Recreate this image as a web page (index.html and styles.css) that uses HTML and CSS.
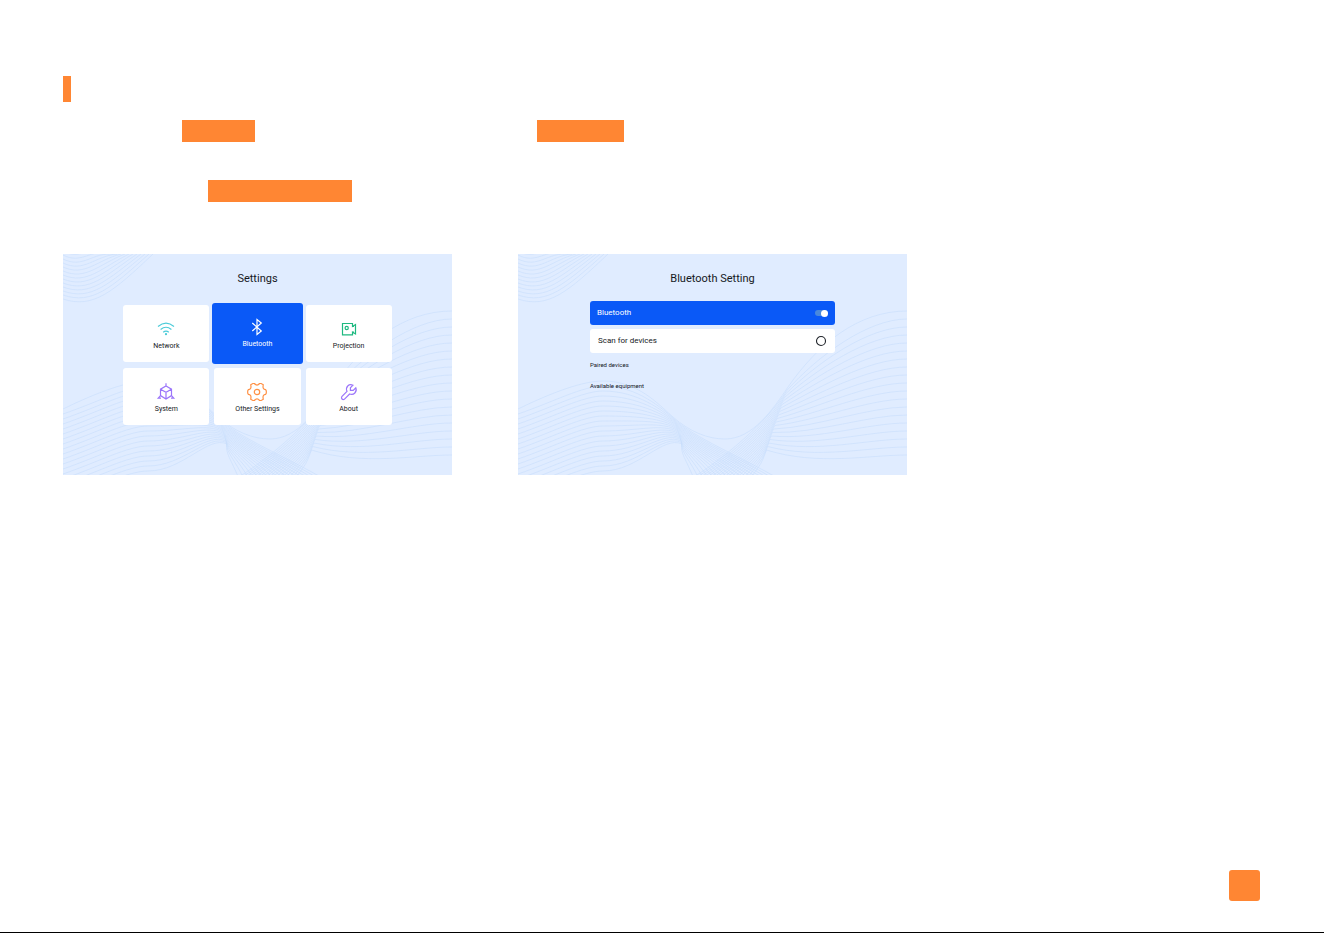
FILE: index.html
```
<!DOCTYPE html>
<html lang="en">
<head>
<meta charset="utf-8">
<title>Bluetooth Setting</title>
<link rel="stylesheet" href="styles.css">
</head>
<body>
<main class="page">
  <div class="heading-bar"></div>
  <div class="line"><span class="mark mark-a"></span><span class="mark mark-b"></span></div>
  <div class="line line-last"><span class="mark mark-c"></span></div>

  <div class="screens">
    <section class="screen">
      <svg class="waves" viewBox="0 0 389 221" preserveAspectRatio="none" aria-hidden="true"></svg>
      <h2 class="title">Settings</h2>
      <div class="tiles">
        <button class="tile" type="button">
          <svg class="icon cyan" viewBox="0 0 20 20"><path d="M2 7.5Q10 .8 18 7.5M4.6 10.5Q10 6 15.4 10.5M7.2 13.3Q10 11 12.8 13.3"/><circle cx="10" cy="15.2" r=".5" fill="currentColor"/></svg>
          <span>Network</span>
        </button>
        <button class="tile active" type="button">
          <svg class="icon" viewBox="0 0 20 20"><path d="M5.3 6 14.3 14 10 17.5V2.5L14.3 6 5.3 14"/></svg>
          <span>Bluetooth</span>
        </button>
        <button class="tile" type="button">
          <svg class="icon green" viewBox="0 0 20 20"><path d="M3.5 4.5H13.5V7.4L16.5 5.5V15L13.5 13V15.8H3.5ZM13.5 7.4H15M13.5 13H15"/><circle cx="7.7" cy="9" r="1.6"/></svg>
          <span>Projection</span>
        </button>
        <button class="tile" type="button">
          <svg class="icon purple" viewBox="0 0 20 20"><path d="M10 4 15.5 7.2V13.6L10 17 4.5 13.6V7.2ZM4.5 7.2 10 10.3 15.5 7.2M10 10.3V17M10 4V1.2M4.5 13.6 2.2 16.2H5M15.5 13.6 17.8 16.2H15"/></svg>
          <span>System</span>
        </button>
        <button class="tile" type="button">
          <svg class="icon orange" viewBox="0 0 20 20"><path d="M5.8 1.5H7.4Q10 4.6 12.6 1.5H14.2L16.3 2.7Q15.2 7.2 18.6 7.6L19.3 9V11L18.6 12.4Q15.2 12.8 16.3 17.3L14.2 18.5H12.6Q10 15.4 7.4 18.5H5.8L3.7 17.3Q4.8 12.8 1.4 12.4L.7 11V9L1.4 7.6Q4.8 7.2 3.7 2.7Z"/><circle cx="10" cy="10" r="2.7"/></svg>
          <span>Other Settings</span>
        </button>
        <button class="tile" type="button">
          <svg class="icon purple" viewBox="0 0 20 20"><path d="M14 3.2 11.4 5.8V8.4H14.2L16.8 5.8C18.4 9.8 14.8 13.6 10.6 12L5.3 17.3Q4 18 3 17T2.8 14.7L8 9.4C6.2 5 9.8 1.4 14 3.2Z"/></svg>
          <span>About</span>
        </button>
      </div>
    </section>

    <section class="screen">
      <svg class="waves" viewBox="0 0 389 221" preserveAspectRatio="none" aria-hidden="true"></svg>
      <h2 class="title">Bluetooth Setting</h2>
      <div class="options">
        <label class="option option-on"><span>Bluetooth</span><input class="switch" type="checkbox" checked></label>
        <button class="option option-scan" type="button"><span class="words"><span>Scan for</span><span>devices</span></span>
          <svg class="spinner" viewBox="0 0 12 12"><circle cx="6" cy="6" r="4.5" stroke-dasharray="27.5 0.8"/></svg>
        </button>
        <h3 class="group">Paired devices</h3>
        <h3 class="group">Available equipment</h3>
      </div>
    </section>
  </div>

  <div class="page-number"></div>
</main>
<script src="waves.js"></script>
</body>
</html>
```

FILE: styles.css
```
* {
  box-sizing: border-box;
}

body {
  margin: 0;
  background: #fff;
  color: #15181d;
  font-family: Roboto, "Liberation Sans", sans-serif;
}

button {
  border: 0;
  font: inherit;
  color: inherit;
}

.page {
  display: flex;
  flex-direction: column;
  min-height: 100vh;
  padding: 76px 64px 31px 63px;
  border-bottom: 1px solid #000;
}

.heading-bar {
  width: 8px;
  height: 26px;
  margin-bottom: 18px;
  background: #ff8633;
}

.line {
  display: flex;
  height: 22px;
  margin-bottom: 38px;
}

.line-last {
  margin-bottom: 52px;
}

.mark {
  background: #ff8633;
}

.mark-a {
  width: 73px;
  margin-left: 119px;
}

.mark-b {
  width: 87px;
  margin-left: 282px;
}

.mark-c {
  width: 144px;
  margin-left: 145px;
}

.screens {
  display: grid;
  grid-template-columns: 1fr 1fr;
  gap: 66px;
  max-width: 844px;
}

.screen {
  position: relative;
  display: flex;
  flex-direction: column;
  align-items: center;
  min-height: 221px;
  padding-top: 17px;
  background: #e0ecff;
}

.waves {
  position: absolute;
  inset: 0;
  width: 100%;
  height: 100%;
  fill: none;
  stroke: #c8ddfc;
  stroke-width: 0.6;
}

.title {
  position: relative;
  margin: 0;
  font-size: 11px;
  line-height: 16px;
  font-weight: 400;
}

.tiles {
  position: relative;
  display: grid;
  grid-template-columns: repeat(3, 1fr);
  grid-auto-rows: 57px;
  gap: 6px 5px;
  width: 69%;
  margin-top: 18px;
}

.tile {
  display: flex;
  flex-direction: column;
  align-items: center;
  gap: 2px;
  padding: 14px 0 0;
  border-radius: 3px;
  background: #fff;
  font-size: 7px;
  line-height: 10px;
}

.active {
  margin: -2px;
  background: #0a59f7;
  color: #fff;
}

.icon {
  width: 20px;
  height: 20px;
  fill: none;
  stroke: currentColor;
  stroke-width: 1.2;
}

.cyan {
  color: #4bcbd8;
}

.green {
  color: #1eb980;
}

.purple {
  color: #9b75fa;
}

.orange {
  color: #ff9145;
}

.options {
  position: relative;
  display: flex;
  flex-direction: column;
  width: 63%;
  margin-top: 14px;
}

.option {
  display: flex;
  align-items: center;
  justify-content: space-between;
  height: 24px;
  margin-bottom: 4px;
  padding: 0 7px;
  border-radius: 3px;
  background: #fff;
  font-size: 8px;
  line-height: 10px;
}

.option-on {
  background: #0a59f7;
  color: #fff;
}

.option-scan {
  padding: 0 8px;
}

.words {
  display: flex;
  gap: 2px;
}

.switch {
  appearance: none;
  display: flex;
  align-items: center;
  justify-content: flex-end;
  width: 13px;
  height: 6px;
  margin: 0;
  border-radius: 4px;
  background: #4a88dc;
}

.switch::after {
  content: "";
  flex: none;
  width: 7px;
  height: 7px;
  border-radius: 50%;
  background: #fff;
}

.spinner {
  width: 12px;
  height: 12px;
  fill: none;
  stroke: #20242a;
  stroke-width: 1.1;
}

.group {
  margin: 3px 0 8px;
  font-size: 6px;
  line-height: 10px;
  font-weight: 400;
}

.page-number {
  width: 31px;
  height: 31px;
  margin: auto 0 0 auto;
  border-radius: 3px;
  background: #ff8633;
}
```

FILE: waves.js
```
// Draws the contour lines behind each screen.
const lines = [
  // The rim of the valley, from the left crest to the right one.
  "M0 155C35 138 65 127 85 127C120 127 140 150 155 163C172 178 190 185 207 185" +
  "C235 185 255 155 270 133C300 90 340 57 389 57"
];

const count = 18;
for (let k = 1; k <= count; k++) {
  const rest = count - k;

  // Left slope: over the crest, along the rim, then down into the valley.
  const left = 155 + 5 * k;
  const crest = 127 + 5 * k;
  const joinL = 163 + 1.5 * k;
  const exitL = 176 + 5 * rest;
  lines.push(
    `M0 ${left}C35 ${left - 12} 65 ${crest} 85 ${crest}` +
    `C120 ${crest} 145 ${joinL - 9} ${155 + 0.5 * k} ${joinL}` +
    `C${162 + 0.8 * rest} ${joinL + 9 + 0.6 * rest} ${exitL - 8 - 1.5 * rest} 205 ${exitL} 225`
  );

  // Right slope: the mirror of it, with a higher crest.
  const right = 57 + 8 * k;
  const joinX = 270 - 1.2 * k;
  const joinR = 133 + 3.5 * k;
  const exitR = 232 - 3.5 * rest;
  lines.push(
    `M389 ${right}C350 ${right} 300 ${joinR - 38 + 3 * k} ${joinX} ${joinR}` +
    `C${joinX - 5 - 0.8 * rest} ${joinR + 14 + rest} ${exitR + 12 + rest} 208 ${exitR} 225`
  );
}

// Top left corner.
for (let k = 0; k < 14; k++) {
  const y = 45 - 4 * k;
  lines.push(`M0 ${y}C${30 - k} ${y + 10} ${50 - 2 * k} ${y - 7} ${90 - 4 * k} 0`);
}

for (const svg of document.querySelectorAll(".waves")) {
  const path = document.createElementNS("http://www.w3.org/2000/svg", "path");
  path.setAttribute("d", lines.join(""));
  svg.append(path);
}
```
